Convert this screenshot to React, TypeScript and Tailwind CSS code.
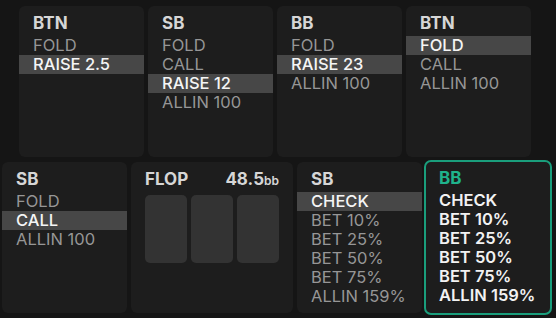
import React from "react";

type Item = { label: string; sel?: boolean };

const font = { fontFamily: "Inter, 'Noto Sans', sans-serif" };

function Card({ title, items, active }: { title: string; items: Item[]; active?: boolean }) {
  if (active) {
    return (
      <div className="-my-[2px] -ml-[2px] w-[128px] h-[155px] shrink-0 rounded-[7px] border-2 border-[#1a9e7c] bg-[#1d1d1d] pt-[6px]">
        <div className="h-[20px] leading-[20px] pl-[13px] text-[17px] font-bold text-[#1fb38c]">{title}</div>
        <div className="mt-[3px]">
          {items.map((it) => (
            <div key={it.label} className="h-[19px] leading-[19px] pl-[13px] text-[16.5px] font-semibold text-[#f2f2f2]">
              {it.label}
            </div>
          ))}
        </div>
      </div>
    );
  }
  return (
    <div className="w-[125px] h-[151px] shrink-0 rounded-[6px] bg-[#1d1d1d] pt-[7px]">
      <div className="h-[20px] leading-[20px] pl-[14px] text-[17px] font-bold text-[#d6d6d6]">{title}</div>
      <div className="mt-[3px]">
        {items.map((it) => (
          <div
            key={it.label}
            className={
              it.sel
                ? "h-[19px] leading-[19px] pl-[14px] text-[16.5px] font-medium text-[#f5f5f5] bg-[#474747]"
                : "h-[19px] leading-[19px] pl-[14px] text-[16.5px] text-[#969696]"
            }
          >
            {it.label}
          </div>
        ))}
      </div>
    </div>
  );
}

function Flop() {
  return (
    <div className="w-[162px] h-[151px] shrink-0 rounded-[6px] bg-[#1d1d1d] pt-[7px] px-[14px]">
      <div className="flex h-[20px] items-baseline justify-between leading-[20px]">
        <span className="text-[17px] font-bold text-[#d6d6d6]">FLOP</span>
        <span className="text-[17px] font-bold text-[#d6d6d6]">
          48.5<span className="text-[12px] font-semibold">bb</span>
        </span>
      </div>
      <div className="mt-[6px] flex gap-[4px]">
        <div className="h-[68px] w-[42px] rounded-[5px] bg-[#333333]" />
        <div className="h-[68px] w-[42px] rounded-[5px] bg-[#333333]" />
        <div className="h-[68px] w-[42px] rounded-[5px] bg-[#333333]" />
      </div>
    </div>
  );
}

export default function App() {
  return (
    <div className="w-[556px] h-[318px] overflow-hidden bg-[#151515] pt-[6px]" style={font}>
      <div className="ml-[19px] flex gap-[4px]">
        <Card title="BTN" items={[{ label: "FOLD" }, { label: "RAISE 2.5", sel: true }]} />
        <Card
          title="SB"
          items={[{ label: "FOLD" }, { label: "CALL" }, { label: "RAISE 12", sel: true }, { label: "ALLIN 100" }]}
        />
        <Card title="BB" items={[{ label: "FOLD" }, { label: "RAISE 23", sel: true }, { label: "ALLIN 100" }]} />
        <Card title="BTN" items={[{ label: "FOLD", sel: true }, { label: "CALL" }, { label: "ALLIN 100" }]} />
      </div>
      <div className="ml-[2px] mt-[5px] flex gap-[4px]">
        <Card title="SB" items={[{ label: "FOLD" }, { label: "CALL", sel: true }, { label: "ALLIN 100" }]} />
        <Flop />
        <Card
          title="SB"
          items={[
            { label: "CHECK", sel: true },
            { label: "BET 10%" },
            { label: "BET 25%" },
            { label: "BET 50%" },
            { label: "BET 75%" },
            { label: "ALLIN 159%" },
          ]}
        />
        <Card
          title="BB"
          active
          items={[
            { label: "CHECK" },
            { label: "BET 10%" },
            { label: "BET 25%" },
            { label: "BET 50%" },
            { label: "BET 75%" },
            { label: "ALLIN 159%" },
          ]}
        />
      </div>
    </div>
  );
}
